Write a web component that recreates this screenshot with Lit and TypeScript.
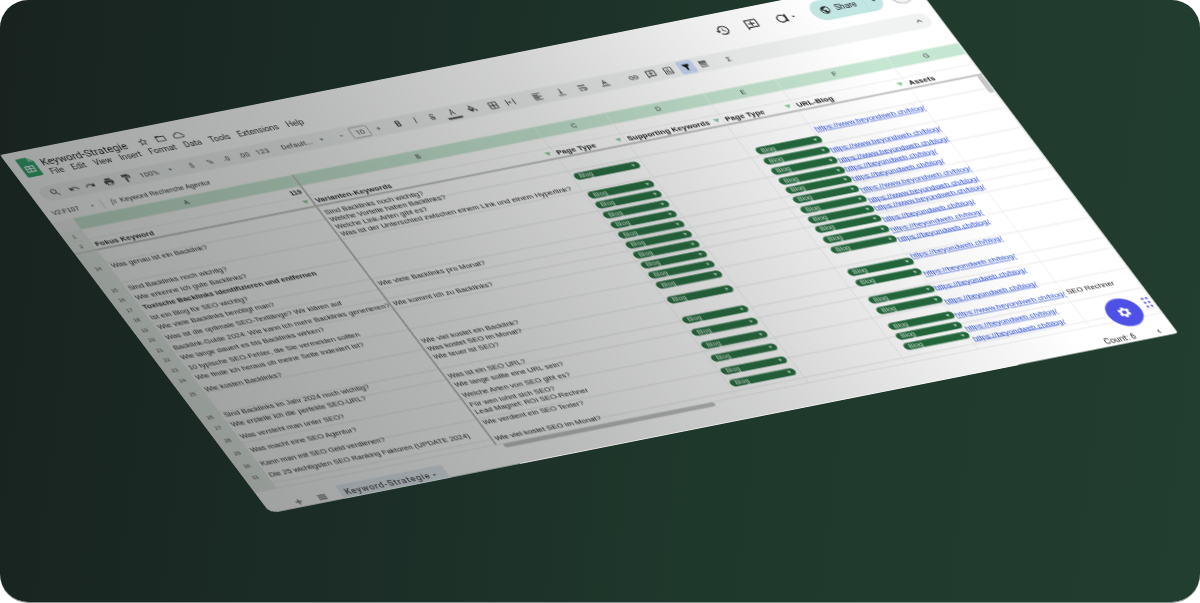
import { LitElement, html, css, svg } from "lit";
import { customElement } from "lit/decorators.js";

const P: Record<string, string> = {
  search: "M15.5 14h-.79l-.28-.27A6.47 6.47 0 0 0 16 9.5 6.5 6.5 0 1 0 9.5 16c1.61 0 3.09-.59 4.23-1.57l.27.28v.79l5 4.99L20.49 19l-4.99-5zm-6 0C7.01 14 5 11.99 5 9.5S7.01 5 9.5 5 14 7.01 14 9.5 11.99 14 9.5 14z",
  undo: "M12.5 8c-2.65 0-5.05.99-6.9 2.6L2 7v9h9l-3.62-3.62c1.39-1.16 3.16-1.88 5.12-1.88 3.54 0 6.55 2.31 7.6 5.5l2.37-.78C21.08 11.03 17.15 8 12.5 8z",
  redo: "M18.4 10.6C16.55 8.99 14.15 8 11.5 8c-4.65 0-8.58 3.03-9.96 7.22L3.9 16c1.05-3.19 4.05-5.5 7.6-5.5 1.95 0 3.73.72 5.12 1.88L13 16h9V7l-3.6 3.6z",
  print: "M19 8H5c-1.66 0-3 1.34-3 3v6h4v4h12v-4h4v-6c0-1.66-1.34-3-3-3zm-3 11H8v-5h8v5zm3-7c-.55 0-1-.45-1-1s.45-1 1-1 1 .45 1 1-.45 1-1 1zm-1-9H6v4h12V3z",
  paint: "M18 4V3c0-.55-.45-1-1-1H5c-.55 0-1 .45-1 1v4c0 .55.45 1 1 1h12c.55 0 1-.45 1-1V6h1v4H9v11c0 .55.45 1 1 1h2c.55 0 1-.45 1-1v-9h8V4h-3z",
  link: "M3.9 12c0-1.71 1.39-3.1 3.1-3.1h4V7H7c-2.76 0-5 2.24-5 5s2.24 5 5 5h4v-1.9H7c-1.71 0-3.1-1.39-3.1-3.1zM8 13h8v-2H8v2zm9-6h-4v1.9h4c1.71 0 3.1 1.39 3.1 3.1s-1.39 3.1-3.1 3.1h-4V17h4c2.76 0 5-2.24 5-5s-2.24-5-5-5z",
  filter: "M4.25 5.61C6.27 8.2 10 13 10 13v6c0 .55.45 1 1 1h2c.55 0 1-.45 1-1v-6s3.72-4.8 5.74-7.39c.51-.66.04-1.61-.79-1.61H5.04c-.83 0-1.3.95-.79 1.61z",
  borders: "M3 3v18h18V3H3zm8 16H5v-6h6v6zm0-8H5V5h6v6zm8 8h-6v-6h6v6zm0-8h-6V5h6v6z",
  merge: "M3 4h2v16H3zM19 4h2v16h-2zM7 11h3V8l3 4-3 4v-3H7zM17 11h-1v2h1z",
  fill: "M16.56 8.94L7.62 0 6.21 1.41l2.38 2.38-5.15 5.15c-.59.59-.59 1.54 0 2.12l5.5 5.5c.29.29.68.44 1.06.44s.77-.15 1.06-.44l5.5-5.5c.59-.58.59-1.53 0-2.12zM5.21 10L10 5.21 14.79 10H5.21zM19 11.5s-2 2.17-2 3.5c0 1.1.9 2 2 2s2-.9 2-2c0-1.33-2-3.5-2-3.5z",
  align: "M3 3h18v2H3zM3 7h12v2H3zM3 11h18v2H3zM3 15h12v2H3zM3 19h18v2H3z",
  valign: "M16 13h-3V3h-2v10H8l4 4 4-4zM4 19v2h16v-2H4z",
  wrap: "M4 19h6v-2H4v2zM20 5H4v2h16V5zm-3 6H4v2h13.25c1.1 0 2 .9 2 2s-.9 2-2 2H15v-2l-3 3 3 3v-2h2c2.21 0 4-1.79 4-4s-1.79-4-4-4z",
  rotate: "M12.75 3h-1.5L6.5 14h2.1l.9-2.2h5l.9 2.2h2.1L12.75 3zm-2.62 7L12 4.98 13.87 10h-3.74zM3 17h18v2H3z",
  comment: "M20 2H4c-1.1 0-2 .9-2 2v18l4-4h14c1.1 0 2-.9 2-2V4c0-1.1-.9-2-2-2zm0 14H5.17L4 17.17V4h16v12zM11 5h2v4h4v2h-4v4h-2v-4H7V9h4z",
  chart: "M19 3H5c-1.1 0-2 .9-2 2v14c0 1.1.9 2 2 2h14c1.1 0 2-.9 2-2V5c0-1.1-.9-2-2-2zm0 16H5V5h14v14zM7 10h2v7H7zm4-3h2v10h-2zm4 6h2v4h-2z",
  views: "M4 4h16v4H4zM4 10h16v2H4zM4 14h16v2H4zM4 18h16v2H4z",
  history: "M13 3a9 9 0 0 0-9 9H1l3.89 3.89.07.14L9 12H6c0-3.87 3.13-7 7-7s7 3.13 7 7-3.13 7-7 7c-1.93 0-3.68-.79-4.94-2.06l-1.42 1.42A8.954 8.954 0 0 0 13 21a9 9 0 0 0 0-18zm-1 5v5l4.28 2.54.72-1.21-3.5-2.08V8H12z",
  video: "M12 4a8 8 0 1 0 5.2 14.1l3.8 1.9V4l-3.8 1.9A8 8 0 0 0 12 4zm0 2.2a5.8 5.8 0 1 1 0 11.6 5.8 5.8 0 0 1 0-11.6z",
  star: "M22 9.24l-7.19-.62L12 2 9.19 8.63 2 9.24l5.46 4.73L5.82 21 12 17.27 18.18 21l-1.63-7.03L22 9.24zM12 15.4l-3.76 2.27 1-4.28-3.32-2.88 4.38-.38L12 6.1l1.71 4.04 4.38.38-3.32 2.88 1 4.28L12 15.4z",
  folder: "M20 6h-8l-2-2H4c-1.1 0-1.99.9-1.99 2L2 18c0 1.1.9 2 2 2h16c1.1 0 2-.9 2-2V8c0-1.1-.9-2-2-2zm0 12H4V8h16v10z",
  cloud: "M19.35 10.04A7.49 7.49 0 0 0 12 4C9.11 4 6.6 5.64 5.35 8.04A5.994 5.994 0 0 0 0 14c0 3.31 2.69 6 6 6h13c2.76 0 5-2.24 5-5 0-2.64-2.05-4.78-4.65-4.96zM19 18H6c-2.21 0-4-1.79-4-4s1.79-4 4-4h.71C7.37 7.69 9.48 6 12 6c3.04 0 5.5 2.46 5.5 5.5v.5H19c1.66 0 3 1.34 3 3s-1.34 3-3 3z",
  gear: "M19.14 12.94c.04-.3.06-.61.06-.94 0-.32-.02-.64-.07-.94l2.03-1.58a.49.49 0 0 0 .12-.61l-1.92-3.32a.488.488 0 0 0-.59-.22l-2.39.96c-.5-.38-1.03-.7-1.62-.94l-.36-2.54a.484.484 0 0 0-.48-.41h-3.84c-.24 0-.43.17-.47.41l-.36 2.54c-.59.24-1.13.57-1.62.94l-2.39-.96c-.22-.08-.47 0-.59.22L2.74 8.87c-.12.21-.08.47.12.61l2.03 1.58c-.05.3-.09.63-.09.94s.02.64.07.94l-2.03 1.58a.49.49 0 0 0-.12.61l1.92 3.32c.12.22.37.29.59.22l2.39-.96c.5.38 1.03.7 1.62.94l.36 2.54c.05.24.24.41.48.41h3.84c.24 0 .44-.17.47-.41l.36-2.54c.59-.24 1.13-.56 1.62-.94l2.39.96c.22.08.47 0 .59-.22l1.92-3.32c.12-.22.07-.47-.12-.61l-2.01-1.58zM12 15.6c-1.98 0-3.6-1.62-3.6-3.6s1.62-3.6 3.6-3.6 3.6 1.62 3.6 3.6-1.62 3.6-3.6 3.6z",
  globe: "M12 2C6.48 2 2 6.48 2 12s4.48 10 10 10 10-4.48 10-10S17.52 2 12 2zm-1 17.93c-3.95-.49-7-3.85-7-7.93 0-.62.08-1.21.21-1.79L9 15v1c0 1.1.9 2 2 2v1.93zm6.9-2.54c-.26-.81-1-1.39-1.9-1.39h-1v-3c0-.55-.45-1-1-1H8v-2h2c.55 0 1-.45 1-1V7h2c1.1 0 2-.9 2-2v-.41c2.93 1.19 5 4.06 5 7.41 0 2.08-.8 3.97-2.1 5.39z",
  caret: "M7 10l5 5 5-5z",
  up: "M7.41 15.41L12 10.83l4.59 4.58L18 14l-6-6-6 6z",
  left: "M15.41 7.41L14 6l-6 6 6 6 1.41-1.41L10.83 12z",
  plus: "M19 13h-6v6h-2v-6H5v-2h6V5h2v6h6z",
  menu: "M3 18h18v-2H3v2zm0-5h18v-2H3v2zm0-7v2h18V6H3z",
};

const ic = (n: string, s = 18) =>
  html`<svg class="ic" width=${s} height=${s} viewBox="0 0 24 24" fill="currentColor">${svg`<path d=${P[n]}></path>`}</svg>`;

type Tool = { u: number; w?: number; i?: string; t?: string; cls?: string };
const TOOLS: Tool[] = [
  { u: 40, i: "search" }, { u: 72, i: "undo" }, { u: 99, i: "redo" }, { u: 131, i: "print" }, { u: 161, i: "paint" },
  { u: 199, w: 40, t: "100%" }, { u: 235, w: 14, i: "caret" }, { u: 271, t: "$" }, { u: 302, t: "%" }, { u: 330, t: ".0" },
  { u: 360, t: ".00" }, { u: 391, t: "123" }, { u: 449, w: 62, t: "Default..." }, { u: 492, w: 14, i: "caret" },
  { u: 525, w: 20, t: "−" }, { u: 557, w: 30, t: "10", cls: "box" }, { u: 588, w: 20, t: "+" },
  { u: 622, t: "B", cls: "bold" }, { u: 651, t: "I", cls: "it" }, { u: 680, t: "S", cls: "strike" }, { u: 714, t: "A", cls: "under" },
  { u: 748, i: "fill" }, { u: 783, i: "borders" }, { u: 812, i: "merge" }, { u: 858, i: "align" }, { u: 897, i: "valign" },
  { u: 934, i: "wrap" }, { u: 972, i: "rotate" }, { u: 1021, i: "link" }, { u: 1051, i: "comment" }, { u: 1080, i: "chart" },
  { u: 1111, i: "filter", cls: "active" }, { u: 1139, i: "views" }, { u: 1182, t: "Σ" },
];

const BODY_TOP = 204;
const MENU = ["File", "Edit", "View", "Insert", "Format", "Data", "Tools", "Extensions", "Help"];
const ROWNUMS: [number, string][] = [
  [237, "14"], [282, "15"], [303, "16"], [324, "17"], [345, "18"], [366, "19"], [387, "20"], [408, "21"], [429, "22"], [450, "23"], [471, "24"],
  [500, "25"], [548, "26"], [570, "27"], [597, "28"], [624, "29"], [651, "30"], [674, "31"],
];
const COL_A: [number, string, boolean?][] = [
  [237, "Was genau ist ein Backlink?"], [283, "Sind Backlinks noch wichtig?"], [304, "Wie erkenne ich gute Backlinks?"],
  [324, "Toxische Backlinks identifizieren und entfernen", true], [345, "Ist ein Blog für SEO wichtig?"],
  [366, "Wie viele Backlinks benötigt man?"], [387, "Was ist die optimale SEO-Textlänge? Wir klären auf"],
  [408, "Backlink-Guide 2024: Wie kann ich mehr Backlinks generieren?"], [429, "Wie lange dauert es bis Backlinks wirken?"],
  [450, "10 typische SEO-Fehler, die Sie vermeiden sollten"], [470, "Wie finde ich heraus ob meine Seite indexiert ist?"],
  [496, "Wie kosten Backlinks?"], [550, "Sind Backlinks im Jahr 2024 noch wichtig?"], [569, "Wie erstelle ich die perfekte SEO-URL?"],
  [595, "Was versteht man unter SEO?"], [623, "Was macht eine SEO Agentur?"], [651, "Kann man mit SEO Geld verdienen?"],
  [675, "Die 25 wichtigsten SEO Ranking Faktoren (UPDATE 2024)"],
];
const COL_B: [number, string][] = [
  [217, "Sind Backlinks noch wichtig?"], [231, "Welche Vorteile haben Backlinks?"], [246, "Welche Link-Arten gibt es?"],
  [262, "Was ist der Unterschied zwischen einem Link und einem Hyperlink?"], [365, "Wie viele Backlinks pro Monat?"],
  [407, "Wie kommt ich zu Backlinks?"], [486, "Wie viel kostet ein Backlink?"], [502, "Was kostet SEO im Monat?"], [519, "Wie teuer ist SEO?"],
  [560, "Was ist ein SEO URL?"], [578, "Wie lange sollte eine URL sein?"], [599, "Welche Arten von SEO gibt es?"],
  [619, "Für wen lohnt sich SEO?"], [634, "Lead Magnet: ROI SEO-Rechner"], [656, "Wie verdient ein SEO Texter?"], [690, "Wie viel kostet SEO im Monat?"],
];
const PILLS_C = [243, 282, 303, 324, 345, 366, 387, 408, 429, 450, 471, 502, 544, 570, 597, 624, 651, 676];
const PILLS_E = [262, 284, 305, 326, 345, 365, 386, 407, 427, 449, 470, 517, 539, 575, 597, 630, 651, 672];
const WWW = "https://www.beyondweb.ch/blog/";
const SHORT = "https://beyondweb.ch/blog/";
const LINKS: [number, string][] = [
  [242, WWW], [285, WWW], [306, WWW], [325, SHORT], [345, SHORT], [369, WWW], [390, WWW], [407, WWW], [430, SHORT], [453, SHORT], [472, SHORT],
  [508, SHORT], [545, SHORT], [574, SHORT], [603, SHORT], [632, WWW], [660, SHORT], [681, SHORT],
];

function stack<T>(items: T[], center: (t: T) => number, h: number, body: (t: T) => unknown) {
  let y = 0;
  return items.map((it) => {
    const c = center(it) - BODY_TOP;
    const mt = c - h / 2 - y;
    y = c + h / 2;
    return html`<div class="cell" style="margin-top:${mt}px;height:${h}px">${body(it)}</div>`;
  });
}

const pill = html`<span class="pill"><span>Blog</span><i></i></span>`;
const tri = html`<i class="tri"></i>`;

@customElement("app-root")
export class AppRoot extends LitElement {
  static styles = css`
    :host { display: block; width: 1200px; height: 603px; background: #fff; overflow: hidden; }
    * { box-sizing: border-box; }
    .card {
      width: 1200px; height: 602px; border-radius: 28px; overflow: hidden;
      box-shadow: 0 1px 0 #8f9391;
      background: linear-gradient(97deg, #18231f 0%, #1b2c26 30%, #1f382c 60%, #223e30 100%);
    }
    .sheet {
      position: relative; width: 1540px; height: 750px; background: #fff; border-radius: 4px 4px 5px 12px;
      transform-origin: 0 0; transform: matrix(0.5896, -0.1169, 0.36, 0.4773, 0, 155);
      font: 13px "Liberation Sans", Arial, sans-serif; color: #111;
      display: flex; flex-direction: column; filter: blur(0.7px); overflow: hidden;
    }
    .shade {
      position: absolute; inset: 0; pointer-events: none;
      background: linear-gradient(90deg, rgba(40,44,42,.44) 0%, rgba(40,44,42,.34) 30%, rgba(40,44,42,.22) 55%, rgba(40,44,42,.07) 78%, rgba(40,44,42,0) 90%);
    }
    .ic { display: block; flex: none; color: #333; }
    .top { height: 71px; flex: none; display: flex; align-items: flex-start; padding: 16px 18px 0 16px; font-family: Roboto, sans-serif; }
    .logo { width: 27px; height: 38px; margin: -2px 13px 0 0; flex: none; }
    .titles { display: flex; flex-direction: column; gap: 1px; }
    .titlerow { display: flex; align-items: center; height: 24px; margin-left: -4px; }
    .title { font-size: 18px; margin-right: 18px; width: 146px; white-space: nowrap; }
    .titlerow .ic { margin-right: 12px; }
    .menu { display: flex; gap: 14px; font-size: 14px; }
    .actions { margin-left: auto; display: flex; align-items: center; height: 42px; margin-top: -3px; }
    .act { margin-right: 26px; color: #333; }
    .act.v { display: flex; align-items: center; margin-right: 24px; gap: 1px; }
    .share { width: 118px; height: 40px; border-radius: 20px; background: #c2e7e3; display: flex; align-items: center; padding-left: 14px; gap: 8px; font-size: 14px; margin-right: 14px; }
    .share .dv { width: 1px; height: 40px; background: #9ac; opacity: .25; margin-left: 4px; }
    .avatar { width: 34px; height: 34px; border-radius: 50%; border: 2px solid #bbb; background: #f4f4f4; }
    .toolbar { margin: 2px 16px 0; height: 30px; border-radius: 15px; background: #f1f3f3; display: flex; align-items: center; font-family: Roboto, sans-serif; font-size: 13px; position: relative; flex: none; }
    .tool { flex: none; display: flex; align-items: center; justify-content: center; height: 26px; white-space: nowrap; color: #333; border-radius: 4px; }
    .tool.bold { font-weight: 700; font-size: 14px; }
    .tool.it { font-style: italic; font-size: 14px; }
    .tool.strike { text-decoration: line-through; font-size: 14px; }
    .tool.under { border-bottom: 4px solid #111; height: 22px; font-size: 14px; }
    .tool.box { border: 1px solid #777; height: 22px; border-radius: 3px; }
    .tool.active { background: #c5d6f3; }
    .tool.active .ic { color: #111; }
    .collapse { margin-left: auto; margin-right: 10px; }
    .formula { height: 39px; flex: none; display: flex; align-items: center; font-size: 12px; padding-left: 12px; padding-top: 7px; }
    .nm { width: 62px; }
    .sp { width: 1px; height: 18px; background: #bbb; margin: 0 14px 0 10px; }
    .fx { font-style: italic; font-family: "Liberation Serif", serif; font-size: 14px; width: 16px; color: #555; }
    .grid { --cols: 37px 374px 409px 120px 166px 121px 190px 121px; flex: none; }
    .band, .hdr, .body { display: grid; grid-template-columns: var(--cols); }
    .band { height: 23px; }
    .band div { background: #c5e6d1; border-right: 1px solid #e4f2e9; display: flex; align-items: center; justify-content: center; font-size: 12px; color: #333; }
    .band div:first-child { background: #f6f6f6; border-right: 0; }
    .band div:nth-child(2) { border-right: 3px solid #b9bbb9; }
    .hdr { height: 44px; border-bottom: 3px solid #b4b6b4; }
    .hcell { border-right: 1px solid #e8e8e8; display: flex; flex-direction: column; }
    .hcell.a { border-right: 3px solid #b4b6b4; }
    .hcell.n { background: #edf2ee; font-size: 10px; color: #444; align-items: center; }
    .hcell .r1, .hcell .r2 { height: 21px; display: flex; align-items: center; padding: 0 4px; justify-content: space-between; }
    .hcell .r1 { border-bottom: 1px solid #e8e8e8; justify-content: flex-end; font-weight: 700; font-size: 12px; }
    .hcell.n .r1, .hcell.n .r2 { font-weight: 400; font-size: 10px; justify-content: center; }
    .r2 b { white-space: nowrap; font-weight: 700; letter-spacing: .2px; }
    .tri { width: 0; height: 0; border: 5px solid transparent; border-top: 7px solid #86c79e; border-bottom: 0; display: block; flex: none; }
    .body {
      height: 499px;
      background-image: repeating-linear-gradient(to bottom, transparent 0 20px, #e7e8e7 20px 21px);
      background-position: 0 5px; border-bottom: 1px solid #e2e2e2;
    }
    .col { border-right: 1px solid #e9e9e9; min-width: 0; display: flex; flex-direction: column; }
    .col.a { border-right: 3px solid #b4b6b4; }
    .col.n { background: #e9efea; align-items: stretch; text-align: center; font-size: 10px; color: #444; }
    .col .cell { display: flex; align-items: center; padding: 0 4px; white-space: nowrap; flex: none; }
    .col.n .cell { justify-content: center; padding: 0; }
    .col.c .cell { padding-left: 3px; }
    .col.e .cell { padding-left: 14px; }
    .col.f .cell { padding-left: 4px; }
    .sb { font-weight: 700; }
    .pill { width: 110px; height: 14px; border-radius: 7px; background: #226a3c; color: #d6e8da; display: flex; align-items: center; justify-content: space-between; padding: 0 7px 0 8px; font-size: 11.5px; flex: none; }
    .pill i { width: 0; height: 0; border: 3.5px solid transparent; border-top: 4.5px solid #e6efe8; border-bottom: 0; display: block; }
    a { color: #2348d8; text-decoration: underline; }
    .scroll-h { height: 8px; display: flex; flex: none; }
    .scroll-h i { display: block; margin-left: 420px; width: 358px; border-radius: 4px; background: #bfc0bf; }
    .tabs { flex: 1; display: flex; align-items: center; padding-top: 8px; font-family: Roboto, sans-serif; position: relative; }
    .tabs .plus { margin-left: 46px; }
    .tabs .mn { margin-left: 22px; }
    .tab { margin-left: 22px; width: 180px; height: 32px; background: #e4ecf3; border-radius: 0 0 6px 6px; display: flex; align-items: center; justify-content: space-between; padding: 0 14px 0 8px; color: #444; font-weight: 500; font-size: 15px; letter-spacing: 1.2px; white-space: nowrap; }
    .count { margin-left: auto; font-size: 14px; margin-right: 32px; }
    .chev { margin-right: 18px; }
    .vthumb { position: absolute; left: 1529px; top: 209px; width: 9px; height: 36px; background: #c7c7c7; border-radius: 4px; }
    .fab { position: absolute; left: 1456px; top: 665px; width: 56px; height: 56px; border-radius: 50%; background: #4d51e6; display: flex; align-items: center; justify-content: center; }
    .fab .ic { color: #fff; }
    .dots { position: absolute; left: 1522px; top: 672px; }
  `;

  private tools() {
    let prevEnd = 16;
    return TOOLS.map((t) => {
      const w = t.w ?? 26;
      const ml = t.u - w / 2 - prevEnd;
      prevEnd = t.u + w / 2;
      return html`<div class="tool ${t.cls ?? ""}" style="margin-left:${ml}px;width:${w}px">${t.i ? ic(t.i, t.w && t.w < 20 ? 14 : 18) : t.t}</div>`;
    });
  }

  render() {
    const letters = ["", "A", "B", "C", "D", "E", "F", "G"];
    return html`<div class="card"><div class="sheet">
      <div class="top">
        <svg class="logo" viewBox="0 0 27 38">
          <path d="M3 0h15l9 9v26a3 3 0 0 1-3 3H3a3 3 0 0 1-3-3V3a3 3 0 0 1 3-3z" fill="#1fa463"></path>
          <path d="M18 0l9 9h-9z" fill="#8ed1b1"></path>
          <path d="M6 16h15v13H6zM8 18v3h4v-3zm6 0v3h5v-3zM8 23v4h4v-4zm6 0v4h5v-4z" fill="#fff" fill-rule="evenodd"></path>
        </svg>
        <div class="titles">
          <div class="titlerow"><span class="title">Keyword-Strategie</span>${ic("star")}${ic("folder")}${ic("cloud")}</div>
          <div class="menu">${MENU.map((m) => html`<span>${m}</span>`)}</div>
        </div>
        <div class="actions">
          <div class="act">${ic("history", 24)}</div>
          <div class="act">${ic("comment", 24)}</div>
          <div class="act v">${ic("video", 24)}${ic("caret", 14)}</div>
          <div class="share">${ic("globe", 18)}<span>Share</span><i class="dv"></i>${ic("caret", 16)}</div>
          <div class="avatar"></div>
        </div>
      </div>
      <div class="toolbar">${this.tools()}<div class="collapse">${ic("up", 18)}</div></div>
      <div class="formula"><span class="nm">V2:F107</span>${ic("caret", 12)}<i class="sp"></i><span class="fx">fx</span><span>Keyword Recherche Agentur</span></div>
      <div class="grid">
        <div class="band">${letters.map((l) => html`<div>${l}</div>`)}</div>
        <div class="hdr">
          <div class="hcell n"><div class="r1">1</div><div class="r2">2</div></div>
          <div class="hcell a"><div class="r1">119</div><div class="r2"><b>Fokus Keyword</b>${tri}</div></div>
          <div class="hcell"><div class="r1"></div><div class="r2"><b>Varianten-Keywords</b>${tri}</div></div>
          <div class="hcell"><div class="r1"></div><div class="r2"><b>Page Type</b>${tri}</div></div>
          <div class="hcell"><div class="r1"></div><div class="r2"><b>Supporting Keywords</b>${tri}</div></div>
          <div class="hcell"><div class="r1"></div><div class="r2"><b>Page Type</b>${tri}</div></div>
          <div class="hcell"><div class="r1"></div><div class="r2"><b>URL-Blog</b>${tri}</div></div>
          <div class="hcell"><div class="r1"></div><div class="r2"><b>Assets</b></div></div>
        </div>
        <div class="body">
          <div class="col n">${stack(ROWNUMS, (r) => r[0], 16, (r) => r[1])}</div>
          <div class="col a">${stack(COL_A, (r) => r[0], 16, (r) => html`<span class=${r[2] ? "sb" : ""}>${r[1]}</span>`)}</div>
          <div class="col">${stack(COL_B, (r) => r[0], 13, (r) => r[1])}</div>
          <div class="col c">${stack(PILLS_C, (v) => v, 14, () => pill)}</div>
          <div class="col"></div>
          <div class="col e">${stack(PILLS_E, (v) => v, 14, () => pill)}</div>
          <div class="col f">${stack(LINKS, (r) => r[0], 16, (r) => html`<a>${r[1]}</a>`)}</div>
          <div class="col">${stack([[630, "SEO Rechner"]] as [number, string][], (r) => r[0], 16, (r) => r[1])}</div>
        </div>
      </div>
      <div class="scroll-h"><i></i></div>
      <div class="tabs">
        <div class="plus">${ic("plus", 18)}</div>
        <div class="mn">${ic("menu", 18)}</div>
        <div class="tab"><span>Keyword-Strategie</span>${ic("caret", 14)}</div>
        <div class="count">Count: 6</div>
        <div class="chev">${ic("left", 16)}</div>
      </div>
      <div class="vthumb"></div>
      <div class="fab">${ic("gear", 24)}</div>
      <svg class="dots" width="14" height="24" viewBox="0 0 14 24" fill="#4d51e6">
        <circle cx="3" cy="3" r="2"></circle><circle cx="10" cy="3" r="2"></circle>
        <circle cx="3" cy="11" r="2"></circle><circle cx="10" cy="11" r="2"></circle>
        <circle cx="3" cy="19" r="2"></circle><circle cx="10" cy="19" r="2"></circle>
      </svg>
      <div class="shade"></div>
    </div></div>`;
  }
}
